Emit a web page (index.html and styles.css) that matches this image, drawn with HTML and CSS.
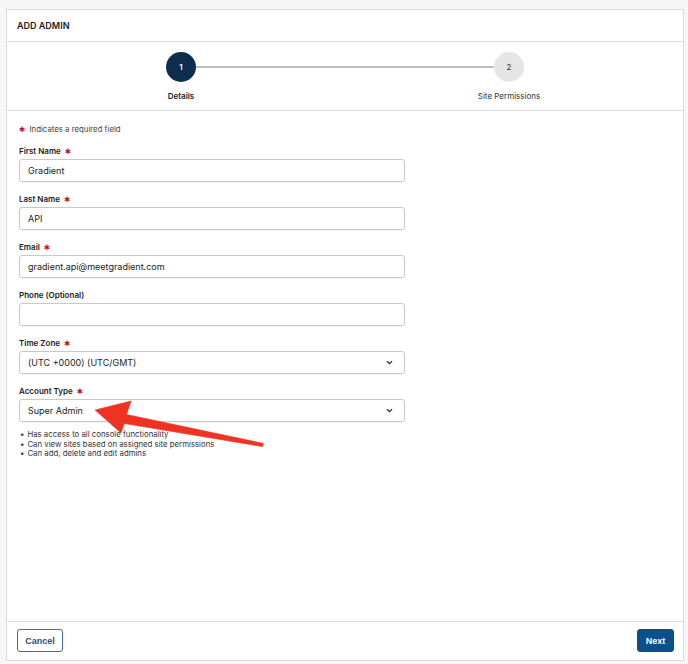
FILE: index.html
```html
<!DOCTYPE html>
<html>
<head>
<meta charset="utf-8">
<link rel="stylesheet" href="styles.css">
</head>
<body>
<div class="card">
  <div class="card-header">ADD ADMIN</div>
  <div class="stepper">
    <div class="track">
      <div class="circle active">1</div>
      <div class="line"></div>
      <div class="circle">2</div>
    </div>
    <div class="labels">
      <div class="step-label">Details</div>
      <div class="step-label">Site Permissions</div>
    </div>
  </div>
  <div class="card-body">
    <div class="note"><span class="req">&#x2731;</span> Indicates a required field</div>
    <div class="field">
      <div class="label">First Name <span class="req">&#x2731;</span></div>
      <div class="input">Gradient</div>
    </div>
    <div class="field">
      <div class="label">Last Name <span class="req">&#x2731;</span></div>
      <div class="input">API</div>
    </div>
    <div class="field">
      <div class="label">Email <span class="req">&#x2731;</span></div>
      <div class="input">gradient.api@meetgradient.com</div>
    </div>
    <div class="field">
      <div class="label">Phone (Optional)</div>
      <div class="input"></div>
    </div>
    <div class="field">
      <div class="label">Time Zone <span class="req">&#x2731;</span></div>
      <div class="input select"><span>(UTC +0000) (UTC/GMT)</span>
        <svg class="chev" width="7" height="5" viewBox="0 0 7 5"><path d="M1 1.2 L3.5 3.7 L6 1.2" fill="none" stroke="#333" stroke-width="1.3"/></svg>
      </div>
    </div>
    <div class="field last">
      <div class="label">Account Type <span class="req">&#x2731;</span></div>
      <div class="input select"><span>Super Admin</span>
        <svg class="chev" width="7" height="5" viewBox="0 0 7 5"><path d="M1 1.2 L3.5 3.7 L6 1.2" fill="none" stroke="#333" stroke-width="1.3"/></svg>
      </div>
    </div>
    <ul class="bullets">
      <li>Has access to all console functionality</li>
      <li>Can view sites based on assigned site permissions</li>
      <li>Can add, delete and edit admins</li>
    </ul>
  </div>
  <div class="card-footer">
    <button class="btn btn-outline">Cancel</button>
    <button class="btn btn-primary">Next</button>
  </div>
  <svg class="arrow" width="688" height="664" viewBox="0 0 688 664">
    <path d="M95 410 L131 401 L126.5 414.5 L263.3 443.4 L262.7 446.6 L124.3 423.5 L121 433 Z" fill="#ee3322" stroke="#ee3322" stroke-width="0.6" stroke-linejoin="round"/>
  </svg>
</div>
</body>
</html>
```
FILE: styles.css
```css
html, body {
  margin: 0;
  padding: 0;
}
body {
  background: #f6f6f6;
  font-family: Inter, "Noto Sans", sans-serif;
  color: #222;
  padding: 9px 4px 3px 6px;
  width: 688px;
  height: 664px;
  box-sizing: border-box;
}
.card {
  width: 678px;
  height: 652px;
  background: #fff;
  border: 1px solid #dadada;
  box-sizing: border-box;
  display: flex;
  flex-direction: column;
}
.card-header {
  height: 32px;
  box-sizing: border-box;
  border-bottom: 1px solid #dcdcdc;
  padding-left: 10px;
  font-size: 9px;
  font-weight: 600;
  line-height: 31px;
  color: #1c1c1c;
}
.stepper {
  height: 69px;
  box-sizing: border-box;
  border-bottom: 1px solid #dcdcdc;
  padding-top: 10px;
}
.track {
  display: flex;
  align-items: center;
  margin: 0 159px;
}
.circle {
  width: 30px;
  height: 30px;
  border-radius: 50%;
  background: #e6e6e6;
  color: #333;
  font-size: 8px;
  display: flex;
  align-items: center;
  justify-content: center;
}
.circle.active {
  background: #0d2d4f;
  color: #fff;
  font-weight: 600;
}
.line {
  flex: 1;
  height: 1.5px;
  background: #bdbdbd;
}
.labels {
  display: flex;
  justify-content: space-between;
  padding: 0 114px;
  margin-top: 9px;
}
.step-label {
  width: 120px;
  text-align: center;
  font-size: 8px;
  line-height: 10px;
  color: #333;
}
.labels .step-label:first-child {
  font-weight: 600;
  color: #222;
}
.card-body {
  flex: 1;
  padding: 12px 0 0 12px;
}
.note {
  font-size: 7.8px;
  line-height: 12px;
  color: #444;
  margin-bottom: 11px;
}
.req {
  color: #c8102e;
  font-family: "DejaVu Sans", sans-serif;
  font-size: 7.5px;
  font-weight: 400;
  line-height: 1;
  vertical-align: 0.5px;
}
.note .req {
  margin-right: 2px;
}
.field {
  margin-bottom: 12px;
}
.field.last {
  margin-bottom: 0;
}
.label {
  font-size: 8px;
  font-weight: 600;
  line-height: 10px;
  height: 10px;
  color: #1c1c1c;
  margin-bottom: 3px;
}
.label .req {
  margin-left: 2px;
}
.input {
  width: 386px;
  height: 23px;
  box-sizing: border-box;
  border: 1px solid #c9c9c9;
  border-radius: 3px;
  padding: 0 8px;
  font-size: 9px;
  line-height: 21px;
  color: #222;
  box-shadow: 0 1px 1px rgba(0,0,0,0.04);
}
.select {
  display: flex;
  justify-content: space-between;
  align-items: center;
}
.chev {
  margin-right: 3px;
}
.bullets {
  list-style: none;
  margin: 8px 0 0 0;
  padding: 0 0 0 1px;
  font-size: 7.8px;
  line-height: 9.5px;
  color: #333;
}
.bullets li::before {
  content: "\2022";
  margin-right: 3px;
}
.card-footer {
  height: 39px;
  box-sizing: border-box;
  border-top: 1px solid #dcdcdc;
  display: flex;
  justify-content: space-between;
  align-items: flex-start;
  padding: 7px 9px 0 10px;
}
.btn {
  height: 23px;
  border-radius: 3px;
  font-family: "Liberation Sans", Arial, sans-serif;
  font-size: 9px;
  font-weight: 700;
  padding: 0;
  cursor: pointer;
}
.btn-outline {
  width: 46px;
  background: #fff;
  border: 1px solid #3a6ea5;
  color: #1f4f85;
}
.btn-primary {
  width: 37px;
  background: #0c4f8e;
  border: 1px solid #0c4f8e;
  color: #fff;
}
.arrow {
  position: absolute;
  left: 0;
  top: 0;
  pointer-events: none;
}
```
